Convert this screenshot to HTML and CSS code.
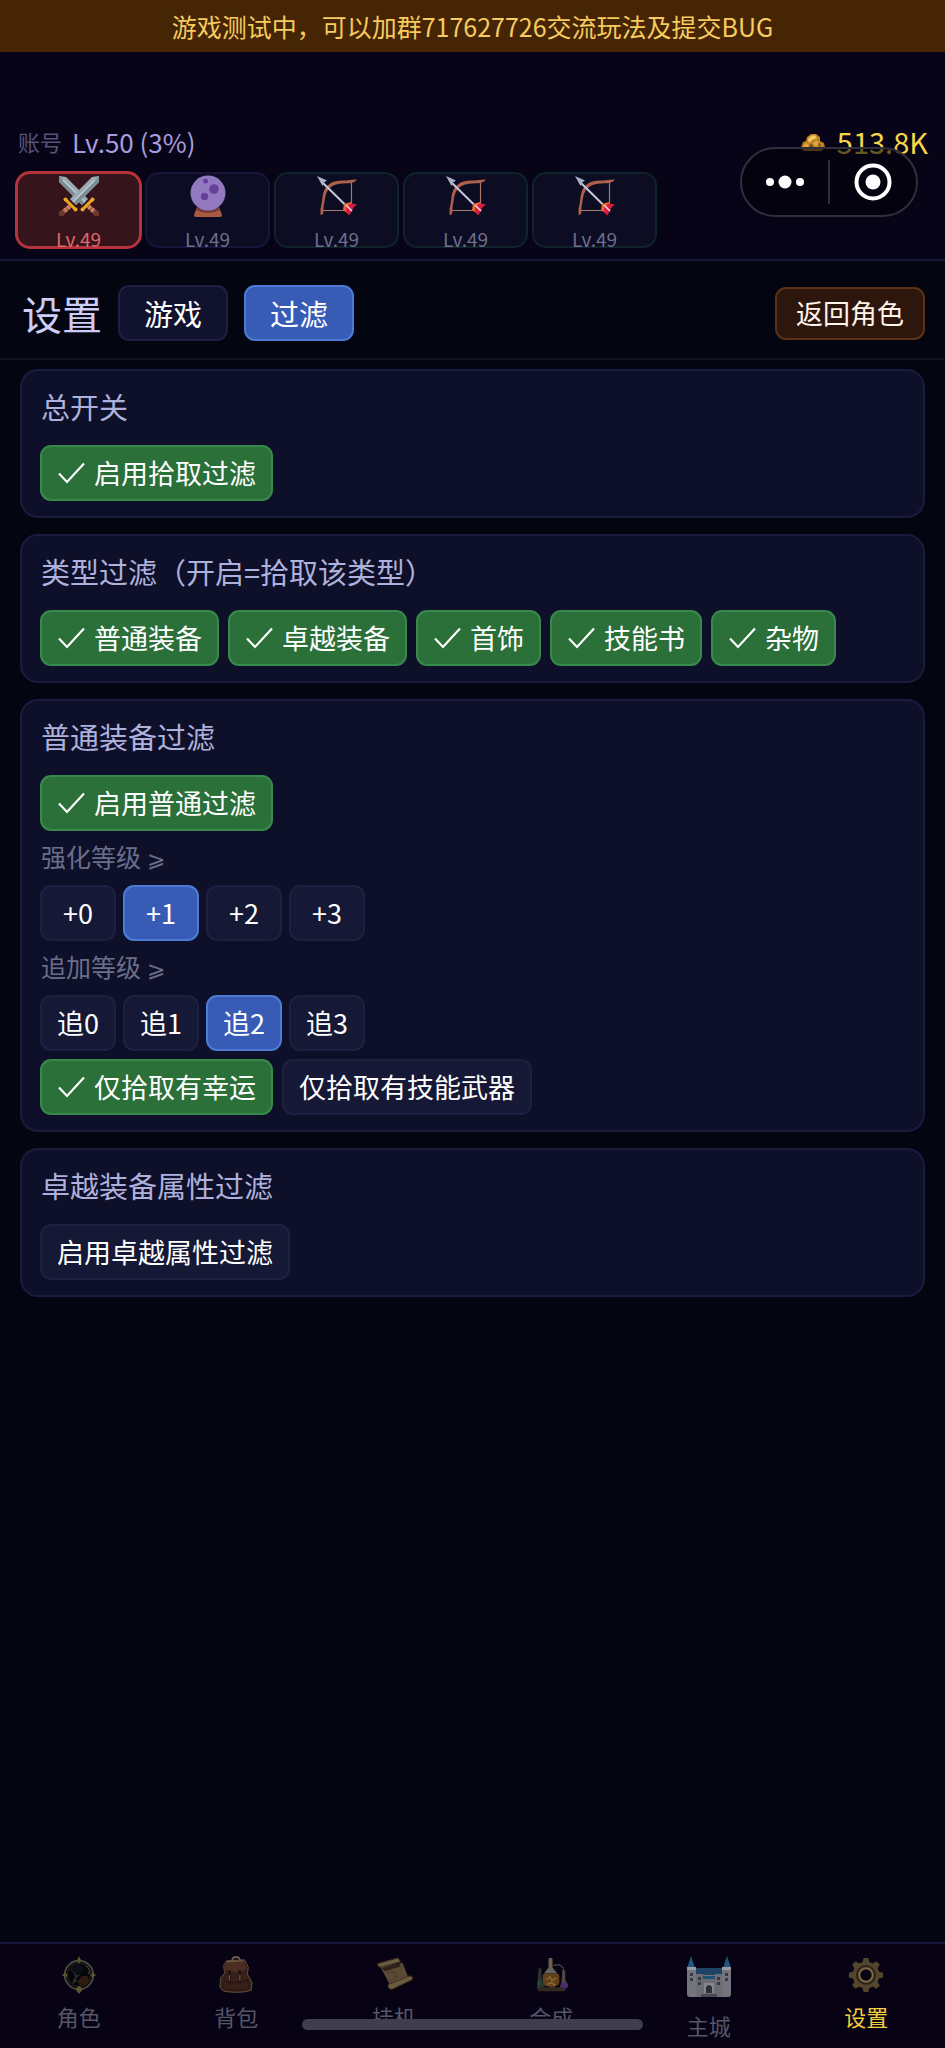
FILE: index.html
```html
<!DOCTYPE html>
<html lang="zh-CN">
<head>
    <meta charset="UTF-8">
    <meta name="viewport" content="width=device-width, initial-scale=1.0">
    <title>设置</title>
    <link rel="stylesheet" href="styles.css">
</head>
<body>

    <!-- Shared icons -->
    <svg class="sprite" aria-hidden="true">
        <symbol id="check" viewBox="0 0 28 28">
            <path d="M2 14.500L10 23L27 4.500" fill="none" stroke="currentColor" stroke-width="2.200"/>
        </symbol>
        <symbol id="bow" viewBox="0 0 40 40">
            <path d="M34.500 5V34.500H4.500" fill="none" stroke="#a87868" stroke-width="1.200"/>
            <path d="M40 3.500C36 3 31 4.500 26 4.500C13 4.500 7 10 5.500 21C5 26 4.500 29 3.500 33V39C5 39.500 6.500 38 6.500 35C6 30 7.500 27 8 22C9.500 13 15 8 25 7.500C30 7.200 35 7.500 38 5.500Z" fill="#b05f4c"/>
            <path d="M5 6L33 33.500" stroke="#c5c9da" stroke-width="2"/>
            <path d="M0 0L10 4.500L7 6.500L5.500 10Z" fill="#a9b0c4"/>
            <path d="M27 28L34 26L35 33L30 37L26 34Z" fill="#f0662a"/>
            <path d="M30 30L34 27.500L40 28.500L36 32L35 35L32 39.500L29 36L29 32Z" fill="#d61d42"/>
            <path d="M29 29L35 35" stroke="#f2d5dc" stroke-width="1.600"/>
        </symbol>
        <symbol id="sword" viewBox="0 0 40 40">
            <path d="M40 0V6L17 29L11 23L33 1Z" fill="#9aabb1"/>
            <path d="M40 0V6L17 29L14 26Z" fill="#7b8e95"/>
            <path d="M36 4L14 26" stroke="#c3d0d4" stroke-width="1.200"/>
            <path d="M10 28L13 31L4 39L1 36Z" fill="#a9684c"/>
            <path d="M5 32L8 36M8 30L11 33" stroke="#dc9873" stroke-width="1.200"/>
            <circle cx="2.500" cy="37.500" r="3" fill="#6c362b"/>
            <path d="M7 24L16 33" stroke="#efa624" stroke-width="3" stroke-linecap="round"/>
            <circle cx="6.500" cy="23.500" r="2" fill="#efa624"/>
            <circle cx="16.500" cy="33.500" r="2" fill="#efa624"/>
        </symbol>
    </svg>

    <div class="notice">游戏测试中，可以加群717627726交流玩法及提交BUG</div>

    <header class="header">
        <div class="account">
            <span class="account-label">账号</span>
            <span class="account-level">Lv.50 (3%)</span>
            <span class="gold">
                <svg class="gold-icon" viewBox="0 0 24 24" aria-hidden="true">
                    <path d="M0 19L2 13L5 12L6 8L10 5L15 5L19 8L19 12L23 14L24 19L20 22H3Z" fill="#bd8323"/>
                    <path d="M7 10L10 7L14 6L16 9L11 11L8 14Z" fill="#f3cd63"/>
                    <path d="M2 17L5 14L8 16L6 20H2ZM12 14L16 11L18 15L15 18Z" fill="#e0a83b"/>
                    <path d="M8 16L11 15L12 18H9ZM17 14L20 16L18 18Z" fill="#7a4c12"/>
                </svg>
                <span>513.8K</span>
            </span>
        </div>

        <div class="slots">
            <button type="button" class="slot active">
                <svg class="slot-icon" viewBox="0 0 40 40" aria-hidden="true">
                    <use href="#sword" width="40" height="40" transform="translate(40 0) scale(-1 1)"/>
                    <use href="#sword" width="40" height="40"/>
                </svg>
                <span>Lv.49</span>
            </button>
            <button type="button" class="slot mage">
                <svg class="slot-icon" viewBox="0 0 40 40" aria-hidden="true">
                    <path d="M9 31H31L34 39Q34 41 32 41H8Q6 41 6 39Z" fill="#a95842"/>
                    <path d="M9 31H31L32 34Q20 40 8 34Z" fill="#733b3c"/>
                    <circle cx="20" cy="17" r="17.500" fill="#9379c0"/>
                    <circle cx="26" cy="13" r="4.800" fill="#65409a"/>
                    <circle cx="16.500" cy="20.500" r="3.700" fill="#65409a"/>
                    <circle cx="17.500" cy="5" r="2.500" fill="#65409a"/>
                </svg>
                <span>Lv.49</span>
            </button>
            <button type="button" class="slot archer">
                <svg class="slot-icon" aria-hidden="true"><use href="#bow"/></svg>
                <span>Lv.49</span>
            </button>
            <button type="button" class="slot archer">
                <svg class="slot-icon" aria-hidden="true"><use href="#bow"/></svg>
                <span>Lv.49</span>
            </button>
            <button type="button" class="slot archer">
                <svg class="slot-icon" aria-hidden="true"><use href="#bow"/></svg>
                <span>Lv.49</span>
            </button>
        </div>

        <!-- Mini program capsule, floats over the header -->
        <div class="capsule">
            <button type="button" class="capsule-btn" aria-label="更多">
                <svg width="40" height="40" viewBox="0 0 40 40" fill="#fff" aria-hidden="true">
                    <circle cx="5" cy="20" r="4"/>
                    <circle cx="20" cy="20" r="6.500"/>
                    <circle cx="35" cy="20" r="4"/>
                </svg>
            </button>
            <button type="button" class="capsule-btn" aria-label="关闭">
                <svg width="40" height="40" viewBox="0 0 40 40" aria-hidden="true">
                    <circle cx="20" cy="20" r="16.500" fill="none" stroke="#fff" stroke-width="4"/>
                    <circle cx="20" cy="20" r="7.500" fill="#fff"/>
                </svg>
            </button>
        </div>
    </header>

    <div class="toolbar">
        <h1>设置</h1>
        <button type="button" class="btn tab">游戏</button>
        <button type="button" class="btn tab selected">过滤</button>
        <button type="button" class="btn back">返回角色</button>
    </div>

    <main class="content">
        <section class="card">
            <h2>总开关</h2>
            <div class="row">
                <button type="button" class="btn on" aria-pressed="true"><svg class="check" aria-hidden="true"><use href="#check"/></svg>启用拾取过滤</button>
            </div>
        </section>

        <section class="card">
            <h2>类型过滤（开启=拾取该类型）</h2>
            <div class="row">
                <button type="button" class="btn on" aria-pressed="true"><svg class="check" aria-hidden="true"><use href="#check"/></svg>普通装备</button>
                <button type="button" class="btn on" aria-pressed="true"><svg class="check" aria-hidden="true"><use href="#check"/></svg>卓越装备</button>
                <button type="button" class="btn on" aria-pressed="true"><svg class="check" aria-hidden="true"><use href="#check"/></svg>首饰</button>
                <button type="button" class="btn on" aria-pressed="true"><svg class="check" aria-hidden="true"><use href="#check"/></svg>技能书</button>
                <button type="button" class="btn on" aria-pressed="true"><svg class="check" aria-hidden="true"><use href="#check"/></svg>杂物</button>
            </div>
        </section>

        <section class="card">
            <h2>普通装备过滤</h2>
            <div class="row">
                <button type="button" class="btn on" aria-pressed="true"><svg class="check" aria-hidden="true"><use href="#check"/></svg>启用普通过滤</button>
            </div>
            <p class="label" id="enhance-label">强化等级 <span class="sign">⩾</span></p>
            <div class="row levels" role="group" aria-labelledby="enhance-label">
                <button type="button" class="btn">+0</button>
                <button type="button" class="btn selected">+1</button>
                <button type="button" class="btn">+2</button>
                <button type="button" class="btn">+3</button>
            </div>
            <p class="label" id="append-label">追加等级 <span class="sign">⩾</span></p>
            <div class="row levels" role="group" aria-labelledby="append-label">
                <button type="button" class="btn">追0</button>
                <button type="button" class="btn">追1</button>
                <button type="button" class="btn selected">追2</button>
                <button type="button" class="btn">追3</button>
            </div>
            <div class="row extra">
                <button type="button" class="btn on" aria-pressed="true"><svg class="check" aria-hidden="true"><use href="#check"/></svg>仅拾取有幸运</button>
                <button type="button" class="btn" aria-pressed="false">仅拾取有技能武器</button>
            </div>
        </section>

        <section class="card">
            <h2>卓越装备属性过滤</h2>
            <div class="row">
                <button type="button" class="btn" aria-pressed="false">启用卓越属性过滤</button>
            </div>
        </section>
    </main>

    <nav class="nav">
        <a href="#role">
            <svg class="nav-icon" viewBox="0 0 40 40" aria-hidden="true">
                <circle cx="20" cy="20" r="15" fill="#05050a" stroke="#4b493b" stroke-width="2"/>
                <circle cx="20" cy="20" r="12.500" fill="none" stroke="#2c2a2c"/>
                <path d="M20 0L22.500 5L20 8L17.500 5ZM20 40L24 35L20 31L16 35ZM2 20L6 17.500L8 20L6 22.500ZM38 20L34 17.500L32 20L34 22.500Z" fill="#5c5331"/>
                <path d="M11 14L15 17L17 22L14 27M17 22L20 20" fill="none" stroke="#30333d" stroke-width="1.500"/>
                <path d="M13 10Q20 6 25 12L23 18L17 19L12 15Z" fill="#0d0d15"/>
                <path d="M18 27L23 21L29 21L31 26L27 31L21 31Z" fill="#2e1b12"/>
                <path d="M28 10L31 15L30 19M13 29L18 25" fill="none" stroke="#4c4d52"/>
            </svg>
            <span>角色</span>
        </a>
        <a href="#bag">
            <svg class="nav-icon" viewBox="0 0 40 40" aria-hidden="true">
                <path d="M16 5Q16 1 20 1Q24 1 24 5" fill="none" stroke="#6b5a4a" stroke-width="2"/>
                <path d="M10 5L29 4L33 12L32 19L37 28L36 36Q25 40 7 37L3 33L4 23L8 18L7 10Z" fill="#38201a" stroke="#5d5140"/>
                <path d="M10 6L28 5L31 14Q22 19 8 15Z" fill="#4c2d23"/>
                <path d="M10 6L28 5" stroke="#7a5d4d" stroke-width="1.200"/>
                <path d="M13 15V29M24 15V29" stroke="#24110d" stroke-width="3"/>
                <path d="M13 20V26M24 20V26" stroke="#6a5242" stroke-width="1.500"/>
                <path d="M8 26Q20 31 32 25L34 34Q20 38 6 34Z" fill="none" stroke="#2a1511"/>
            </svg>
            <span>背包</span>
        </a>
        <a href="#idle">
            <svg class="nav-icon" viewBox="0 0 40 40" aria-hidden="true">
                <path d="M6 12L29 7L36 25L17 33Z" fill="#5b4b34"/>
                <path d="M7 13L26 8L27 11L10 16Z" fill="#2f2115"/>
                <path d="M3 8L24 2L27 6L6 12Q2 11 3 8Z" fill="#6b5b41" stroke="#3d2d1c"/>
                <path d="M14 30L36 21Q41 21 39 25L18 35Q13 35 14 30Z" fill="#6b5b41" stroke="#3d2d1c"/>
                <path d="M13 18L20 16L24 21L17 26M19 17L21 23" fill="none" stroke="#483827"/>
            </svg>
            <span>挂机</span>
        </a>
        <a href="#craft">
            <svg class="nav-icon" viewBox="0 0 40 40" aria-hidden="true">
                <path d="M17 3H22V12L29 21L28 31H12L11 21L17 12Z" fill="#46362a"/>
                <path d="M18 2H21V12L26 18H13L18 12Z" fill="#65625f"/>
                <path d="M12 19H28L29 28L22 34L11 30Z" fill="#5f421c"/>
                <path d="M22 10L29 9L33 13V20" fill="none" stroke="#403d3c" stroke-width="1.500"/>
                <path d="M7 13H10V22L13 31V35H5L6 24Z" fill="#2b332f"/>
                <path d="M32 15H35V25L38 31L35 35H29L31 27Z" fill="#504741"/>
                <path d="M31 28H37L38 32L35 35H30Z" fill="#4d2a72"/>
                <path d="M8 33H34L35 37H6Z" fill="#33291f"/>
                <path d="M15 25L19 22L21 26L25 23M16 30L20 28L25 31" fill="none" stroke="#8f6a2c" stroke-width="1.500"/>
                <path d="M6 26H9V31H6Z" fill="#24502f"/>
            </svg>
            <span>合成</span>
        </a>
        <a href="#city" class="city">
            <svg class="nav-icon" viewBox="0 0 44 42" aria-hidden="true">
                <path d="M8 12H36V19H8Z" fill="#1d4467"/>
                <path d="M4 0L8 12H0ZM40 0L44 12H36Z" fill="#24557c"/>
                <path d="M0 13H9V18H15V19H29V18H35V13H44V38Q44 41 41 41H3Q0 41 0 38Z" fill="#74747d"/>
                <path d="M0 11H9V14H0ZM35 11H44V14H35Z" fill="#999aa2"/>
                <path d="M9 18H16V21H28V18H35V41H9Z" fill="#6c6c76"/>
                <path d="M16 20H28V23H16Z" fill="#1d5272"/>
                <path d="M3 17H6V20H3ZM3 22H6V25H3ZM38 17H41V20H38ZM38 22H41V25H38ZM11 21H14V24H11ZM11 26H14V29H11ZM30 21H33V24H30ZM30 26H33V29H30Z" fill="#383842"/>
                <path d="M17 27H27V37H17Z" fill="#85858d"/>
                <path d="M19 37V31Q22 27 25 31V37Z" fill="#2e2e37"/>
                <path d="M14 38H30V41H14Z" fill="#4a4a54"/>
            </svg>
            <span>主城</span>
        </a>
        <a href="#settings" class="current">
            <svg class="nav-icon" viewBox="0 0 40 40" aria-hidden="true">
                <g fill="#54462c">
                    <path d="M16 8L17.500 2H22.500L24 8V32L22.500 38H17.500L16 32Z"/>
                    <path d="M16 8L17.500 2H22.500L24 8V32L22.500 38H17.500L16 32Z" transform="rotate(45 20 20)"/>
                    <path d="M16 8L17.500 2H22.500L24 8V32L22.500 38H17.500L16 32Z" transform="rotate(90 20 20)"/>
                    <path d="M16 8L17.500 2H22.500L24 8V32L22.500 38H17.500L16 32Z" transform="rotate(135 20 20)"/>
                    <circle cx="20" cy="20" r="14"/>
                </g>
                <circle cx="20" cy="20" r="9.500" fill="none" stroke="#2b2219" stroke-width="2"/>
                <circle cx="20" cy="20" r="7" fill="#070314" stroke="#7d6b46" stroke-width="2"/>
            </svg>
            <span>设置</span>
        </a>
        <div class="home-bar"></div>
    </nav>

</body>
</html>
```
FILE: styles.css
```css
* {
    box-sizing: border-box;
}
body {
    margin: 0;
    min-height: 100vh;
    display: flex;
    flex-direction: column;
    background-color: #030610;
    color: #ffffff;
    font-family: "Noto Sans CJK SC", "Noto Sans", sans-serif;
}
button {
    font-family: inherit;
    color: inherit;
    cursor: pointer;
}
.sprite {
    display: none;
}
/* Top notice */
.notice {
    height: 52px;
    line-height: 52px;
    text-align: center;
    font-size: 25px;
    background-color: #452503;
    color: #f7cb5f;
}
/* Account header */
.header {
    position: relative;
    padding: 70px 17px 11px 16px;
    background-color: #080417;
    border-bottom: 2px solid #17143a;
}
.account {
    display: flex;
    align-items: center;
    gap: 10px;
    height: 38px;
    padding-left: 2px;
}
.account-label {
    font-size: 22px;
    color: #58527a;
}
.account-level {
    font-size: 26px;
    color: #a99cdc;
}
.gold {
    display: flex;
    align-items: center;
    gap: 12px;
    margin-left: auto;
    font-size: 29px;
    color: #f8d448;
}
.gold-icon {
    width: 24px;
    height: 24px;
}
.slots {
    display: flex;
    gap: 4px;
    margin-top: 12px;
}
.slot {
    display: flex;
    flex-direction: column;
    align-items: center;
    justify-content: flex-start;
    gap: 9px;
    width: 125px;
    height: 76px;
    padding: 2px 0 0;
    border: 2px solid #17163a;
    border-radius: 14px;
    background-color: #0c0c22;
    color: #706e8e;
    font-size: 19px;
    line-height: 28px;
}
.slot.archer {
    border-color: #10232a;
}
.slot.active {
    background-color: #35141c;
    border-color: #b5333b;
    box-shadow: 0 0 0 1px #b5333b;
    color: #e2656c;
}
.slot-icon {
    flex: none;
    width: 40px;
    height: 40px;
    overflow: visible;
}
/* Capsule */
.capsule {
    position: absolute;
    top: 95px;
    right: 27px;
    display: flex;
    width: 178px;
    height: 70px;
    border: 2px solid #302e3c;
    border-radius: 35px;
    background-color: rgba(3, 2, 12, 0.6);
}
.capsule-btn {
    flex: 1;
    display: flex;
    align-items: center;
    justify-content: center;
    margin: 11px 0;
    padding: 0;
    border: none;
    background: none;
}
.capsule-btn + .capsule-btn {
    border-left: 2px solid #302e3c;
}
/* Buttons */
.btn {
    display: flex;
    align-items: center;
    justify-content: center;
    height: 56px;
    padding: 0 15px;
    border: 2px solid #1e2042;
    border-radius: 11px;
    background-color: #161936;
    font-size: 27px;
    line-height: 40px;
}
.btn.selected {
    background-color: #385cb6;
    border-color: #4c7bd6;
}
.btn.on {
    background-color: #2b6f39;
    border-color: #378a4b;
}
.check {
    width: 28px;
    height: 28px;
    margin-right: 9px;
}
/* Page toolbar */
.toolbar {
    display: flex;
    align-items: center;
    gap: 16px;
    padding: 24px 20px 17px 22px;
    border-bottom: 2px solid #0f1120;
}
h1 {
    margin: 0;
    font-size: 40px;
    font-weight: 400;
    line-height: 52px;
    color: #cdccf7;
}
.tab {
    width: 110px;
    font-size: 29px;
}
.tab:not(.selected) {
    background-color: #11132e;
}
.back {
    height: 53px;
    padding: 0 19px;
    margin-left: auto;
    background-color: #2d170c;
    border-color: #5c3118;
    color: #fff3ea;
}
/* Cards */
.content {
    flex: 1;
    display: flex;
    flex-direction: column;
    gap: 16px;
    padding: 9px 20px 16px;
}
.card {
    padding: 16px 18px 15px;
    border: 2px solid #1a1c3d;
    border-radius: 18px;
    background-color: #0e1029;
}
h2 {
    margin: 0 1px 20px;
    font-size: 29px;
    font-weight: 400;
    line-height: 38px;
    color: #afb1dd;
}
.row {
    display: flex;
    flex-wrap: wrap;
    gap: 9px;
}
.levels {
    gap: 7px;
}
.levels .btn {
    width: 76px;
    padding: 0;
}
.extra {
    margin-top: 8px;
}
.label {
    margin: 0 1px 4px;
    font-size: 25px;
    line-height: 50px;
    color: #6b6e8b;
}
.sign {
    font-size: 22px;
    line-height: 1;
}
/* Bottom navigation */
.nav {
    position: relative;
    display: flex;
    height: 106px;
    border-top: 2px solid #18163b;
    background-color: #070314;
}
.nav a {
    flex: 1;
    display: flex;
    flex-direction: column;
    align-items: center;
    gap: 6px;
    padding-top: 12px;
    font-size: 22px;
    line-height: 32px;
    color: #555568;
    text-decoration: none;
}
.nav-icon {
    width: 38px;
    height: 38px;
}
.nav .city {
    gap: 11px;
}
.city .nav-icon {
    width: 44px;
    height: 42px;
}
.nav .current {
    color: #f5cd3c;
}
.home-bar {
    position: absolute;
    left: 32%;
    right: 32%;
    bottom: 18px;
    height: 11px;
    border-radius: 6px;
    background-color: #403e4c;
}
```
